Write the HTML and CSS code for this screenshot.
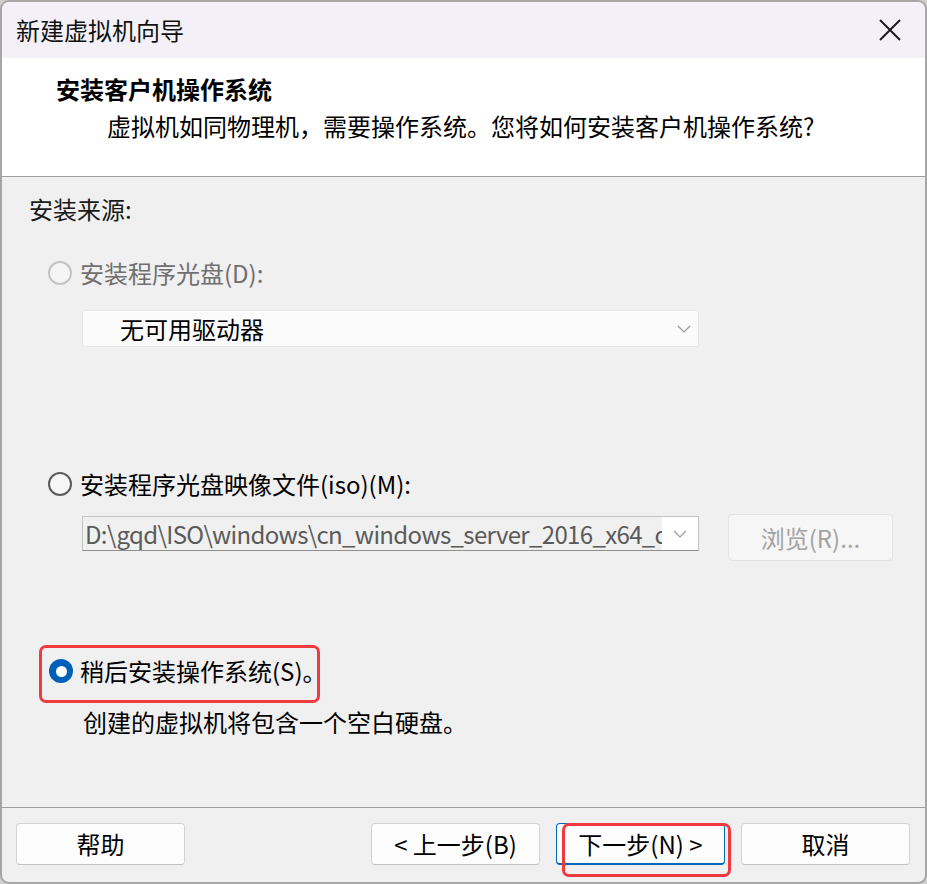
FILE: index.html
```html
<!DOCTYPE html>
<html lang="zh-CN">
<head>
<meta charset="utf-8">
<title>新建虚拟机向导</title>
<link rel="stylesheet" href="styles.css">
</head>
<body>
<div class="window">
  <div class="titlebar">
    <span class="title">新建虚拟机向导</span>
    <svg class="close" width="22" height="22" viewBox="0 0 22 22"><path d="M1 1 L21 21 M21 1 L1 21" stroke="#1b1b1b" stroke-width="2" fill="none"/></svg>
  </div>
  <div class="header">
    <div class="heading">安装客户机操作系统</div>
    <div class="subtitle">虚拟机如同物理机，需要操作系统。您将如何安装客户机操作系统?</div>
  </div>
  <div class="content">
    <div class="section-label">安装来源:</div>
    <div class="radio-row r1 disabled">
      <span class="radio"></span><span class="label">安装程序光盘(D):</span>
    </div>
    <div class="dropdown">
      <span class="dd-text">无可用驱动器</span>
      <svg class="chev" width="14" height="8" viewBox="0 0 14 8"><path d="M1 1 L7 7 L13 1" stroke="#9a9a9a" stroke-width="1.2" fill="none"/></svg>
    </div>
    <div class="radio-row r2">
      <span class="radio"></span><span class="label">安装程序光盘映像文件(iso)(M):</span>
    </div>
    <div class="iso-row">
      <div class="iso-input">
        <span class="iso-text">D:\gqd\ISO\windows\cn_windows_server_2016_x64_d</span>
        <span class="iso-arrow"><svg width="14" height="8" viewBox="0 0 14 8"><path d="M1 1 L7 7 L13 1" stroke="#9a9a9a" stroke-width="1.2" fill="none"/></svg></span>
      </div>
      <div class="browse">浏览(R)...</div>
    </div>
    <div class="radio-row r3">
      <span class="radio checked"></span><span class="label">稍后安装操作系统(S)。</span>
    </div>
    <div class="desc">创建的虚拟机将包含一个空白硬盘。</div>
  </div>
  <div class="footer">
    <div class="btn">帮助</div>
    <div class="spacer"></div>
    <div class="btn">&lt; 上一步(B)</div>
    <div class="btn primary">下一步(N) &gt;</div>
    <div class="btn">取消</div>
  </div>
  <div class="mark mark-radio"></div>
  <div class="mark mark-next"></div>
</div>
</body>
</html>
```
FILE: styles.css
```css
* { box-sizing: border-box; }
html, body { margin: 0; padding: 0; }
body {
  background: #cfcfcf;
  font-family: "Noto Sans CJK SC", "Noto Sans", sans-serif;
  font-size: 24px;
  color: #000;
}
.window {
  position: relative;
  width: 927px;
  height: 884px;
  border: 2px solid #a6a6a6;
  border-radius: 9px;
  overflow: hidden;
  background: #f0f0f0;
  display: flex;
  flex-direction: column;
}
.titlebar {
  height: 56px;
  flex: none;
  background: #f3f1f7;
  display: flex;
  align-items: center;
  padding-left: 14px;
  padding-right: 24px;
}
.title { flex: 1; font-size: 24px; line-height: 32px; color: #111; }
.close { display: block; margin-top: -1px; }
.header {
  height: 119px;
  flex: none;
  background: #fff;
  border-bottom: 1px solid #a0a0a0;
  padding: 15px 0 0 54px;
}
.heading { font-weight: bold; line-height: 32px; }
.subtitle { margin-top: 5px; margin-left: 51px; line-height: 32px; }
.content {
  height: 631px;
  flex: none;
  border-bottom: 1px solid #a0a0a0;
  padding: 16px 0 0 27px;
}
.section-label { line-height: 32px; color: #1a1a1a; }
.radio-row { display: flex; align-items: center; height: 32px; margin-left: 19px; }
.r1 { margin-top: 32px; }
.r2 { margin-top: 121px; }
.r3 { margin-top: 94px; margin-left: 20px; }
.radio {
  width: 24px; height: 24px;
  border-radius: 50%;
  border: 2px solid #5c5c5c;
  background: #f7f7f7;
  flex: none;
  margin-right: 8px;
}
.disabled .radio { border-color: #c4c4c4; background: #f5f5f5; }
.disabled .label { color: #6f6f6f; }
.radio.checked {
  border: none;
  background: #005fb8;
  display: flex; align-items: center; justify-content: center;
}
.radio.checked::after {
  content: "";
  width: 11px; height: 11px; border-radius: 50%;
  background: #fff;
}
.r3 .radio { margin-right: 7px; }
.label { line-height: 32px; }
.dropdown {
  margin-top: 21px;
  margin-left: 53px;
  width: 617px;
  height: 37px;
  background: #fbfbfb;
  border: 1px solid #e6e6e6;
  border-radius: 3px;
  display: flex;
  align-items: center;
  padding-left: 37px;
  padding-right: 7px;
}
.dd-text { flex: 1; line-height: 32px; }
.chev { display: block; }
.iso-row {
  margin-top: 14px;
  margin-left: 53px;
  display: flex;
  align-items: flex-start;
  height: 47px;
}
.iso-input {
  margin-top: 2px;
  width: 617px;
  height: 35px;
  border: 1px solid #c2c2c2;
  border-bottom-color: #8f8f8f;
  background: #fff;
  display: flex;
  overflow: hidden;
}
.iso-text {
  width: 579px;
  background: #f0f0f0;
  white-space: nowrap;
  overflow: hidden;
  padding-left: 2px;
  line-height: 33px;
  letter-spacing: -0.65px;
  color: #5a5a5a;
}
.iso-arrow { flex: 1; display: flex; align-items: center; justify-content: center; }
.browse {
  margin-left: 29px;
  width: 165px;
  height: 47px;
  background: #f6f6f6;
  border: 1px solid #e3e3e3;
  border-radius: 4px;
  color: #a3a3a3;
  display: flex;
  align-items: center;
  justify-content: center;
}
.desc { margin-top: 19px; margin-left: 54px; line-height: 32px; }
.footer {
  flex: 1;
  display: flex;
  align-items: flex-start;
  padding: 15px 15px 0 14px;
  gap: 16px;
}
.spacer { flex: 1; }
.btn {
  width: 169px;
  height: 42px;
  background: #fdfdfd;
  border: 1px solid #d3d3d3;
  border-bottom-color: #c0c0c0;
  border-radius: 4px;
  display: flex;
  align-items: center;
  justify-content: center;
  line-height: 32px;
}
.btn.primary { border: 1px solid #0067c0; border-bottom-width: 2px; }
.mark {
  position: absolute;
  border: 3px solid #f03a3f;
  border-radius: 7px;
  pointer-events: none;
}
.mark-radio { left: 37px; top: 643px; width: 281px; height: 58px; }
.mark-next { left: 560px; top: 821px; width: 169px; height: 54px; }
```
